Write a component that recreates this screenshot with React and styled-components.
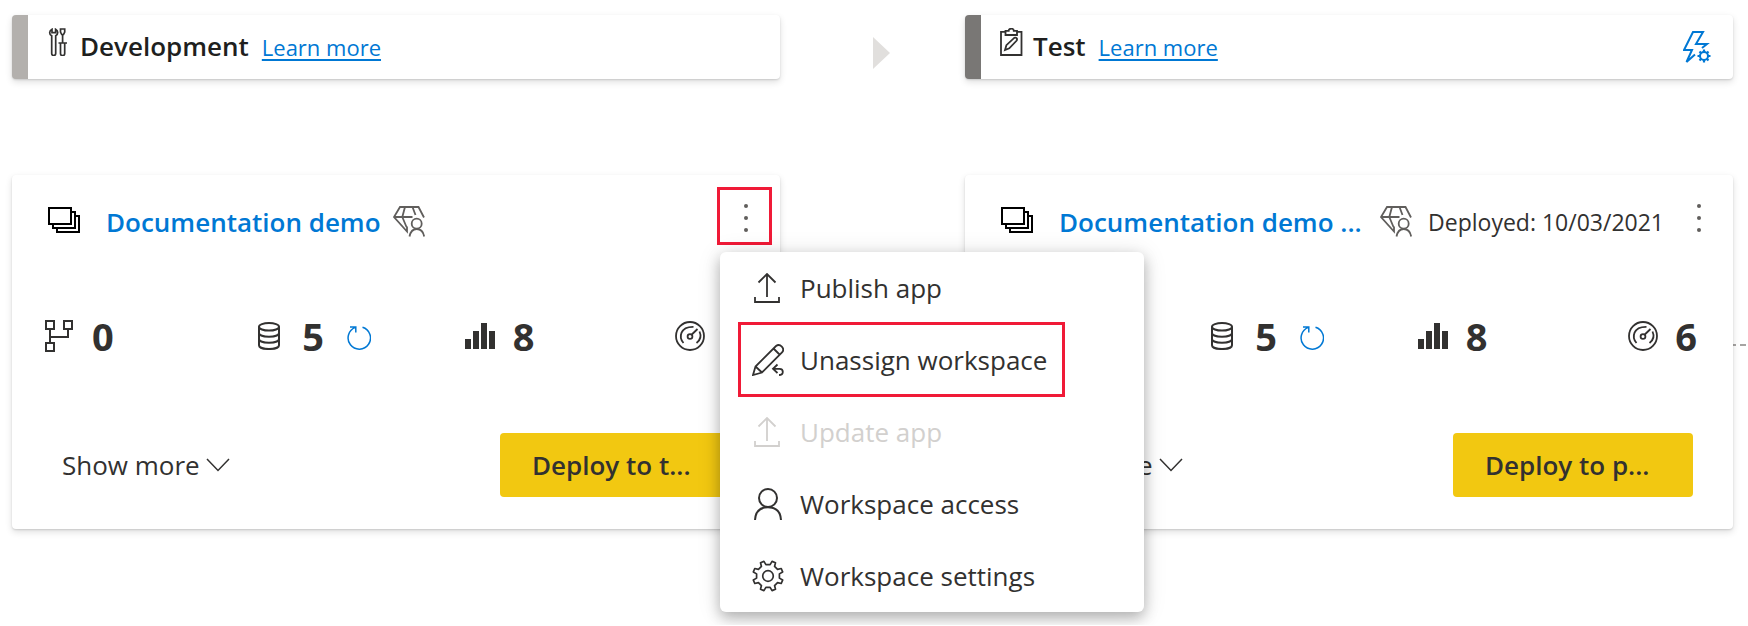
import React from 'react';
import styled, { createGlobalStyle } from 'styled-components';

const GlobalStyle = createGlobalStyle`
  *, *::before, *::after { box-sizing: border-box; }
  body {
    margin: 0;
    background: #fff;
    color: #323130;
    font-family: "Open Sans", "Noto Sans", sans-serif;
    font-size: 26px;
    line-height: 36px;
  }
`;

const Page = styled.main`
  display: grid;
  grid-template-columns: minmax(0, 1fr) 185px minmax(0, 1fr) 15px;
  row-gap: 96px;
  padding: 15px 0 96px 12px;
  overflow: hidden;
`;

const Surface = styled.section`
  background: #fff;
  border-radius: 4px;
  box-shadow: 0 3px 7px rgba(0, 0, 0, 0.13), 0 1px 2px rgba(0, 0, 0, 0.13);
`;

const StageHeader = styled(Surface)`
  display: flex;
  align-items: center;
  min-height: 64px;
  padding-right: 22px;
  border-left: 16px solid ${(p) => p.$accent};
  grid-column: ${(p) => p.$column};
`;

const StageTitle = styled.div`
  display: flex;
  align-items: baseline;
  flex: 1;
  gap: 8px;
  padding: 0 0 2px 16px;
`;

const StageName = styled.h2`
  margin: 0 5px 0 0;
  color: #201f1e;
  font-size: 26px;
  font-weight: 600;
`;

const LearnLink = styled.a`
  color: #0078d4;
  font-size: 22px;
  text-decoration: underline;
  text-decoration-thickness: 2px;
  text-underline-offset: 3px;
`;

const IconButton = styled.button`
  display: flex;
  padding: 0;
  border: 0;
  background: none;
  color: #0078d4;
`;

const StageArrow = styled.div`
  display: flex;
  align-items: center;
  justify-content: center;
  padding-top: 12px;
  color: #e1dfdd;
`;

const Card = styled(Surface)`
  position: relative;
  display: flex;
  flex-direction: column;
  grid-column: ${(p) => p.$column};
  z-index: ${(p) => (p.$raised ? 1 : 0)};
  padding: 12px 0 32px;
`;

const CardHead = styled.header`
  display: flex;
  align-items: center;
  padding: 0 8px 0 36px;
  margin-bottom: 69px;
`;

const CardTitle = styled.div`
  display: flex;
  align-items: center;
  flex: 1;
  padding-top: 11px;
`;

const WorkspaceLink = styled.a`
  flex-grow: ${(p) => (p.$fill ? 1 : 0)};
  margin: 0 12px 0 26px;
  color: #0078d4;
  font-weight: 600;
  text-decoration: none;
  white-space: nowrap;
`;

const Deployed = styled.span`
  padding: 0 6px 0 16px;
  font-size: 23px;
  white-space: nowrap;
`;

const MoreButton = styled.button`
  display: flex;
  align-items: center;
  justify-content: center;
  width: 55px;
  height: 58px;
  padding: 3px 0 0 3px;
  border: 3px solid ${(p) => (p.$marked ? '#f01a37' : 'transparent')};
  background: none;
  color: #605e5c;
`;

const Stats = styled.ul`
  display: grid;
  grid-template-columns: repeat(3, minmax(0, 1fr)) 70px;
  margin: 0;
  padding: 0 36px 0 31px;
  list-style: none;
`;

const Stat = styled.li`
  display: flex;
  align-items: center;
  gap: 17px;
  height: 44px;
`;

const StatIcon = styled.span`
  display: flex;
  justify-content: center;
  width: 32px;
`;

const StatValue = styled.strong`
  font-size: 38px;
  line-height: 44px;
  font-weight: 700;
`;

const RefreshButton = styled(IconButton)`
  padding: 4px 0 0 6px;
`;

const CardFoot = styled.footer`
  display: flex;
  align-items: center;
  justify-content: space-between;
  margin-top: 75px;
  padding: 0 40px 0 50px;
`;

const ShowMore = styled.button`
  display: flex;
  align-items: center;
  gap: 6px;
  padding: 0;
  border: 0;
  background: none;
  color: inherit;
  font: inherit;
`;

const DeployButton = styled.button`
  width: 240px;
  height: 64px;
  padding: 0 32px;
  border: 0;
  border-radius: 4px;
  background: #f2c811;
  color: #323130;
  font: inherit;
  font-weight: 600;
  text-align: left;
  white-space: nowrap;
`;

const Connector = styled.div`
  grid-column: 4;
  height: 2px;
  margin-top: 169px;
  background: repeating-linear-gradient(90deg, #a6a4a2 0 3px, transparent 3px 7px, #a6a4a2 7px 10px);
`;

const Menu = styled.div`
  position: absolute;
  top: 77px;
  left: calc(100% - 60px);
  width: 424px;
  border-radius: 6px;
  background: #fff;
  box-shadow: 0 6px 14px rgba(0, 0, 0, 0.25), 0 2px 24px rgba(0, 0, 0, 0.12);
`;

const MenuItem = styled.button`
  position: relative;
  display: flex;
  align-items: center;
  gap: 16px;
  width: 100%;
  height: 72px;
  padding: 0 32px;
  border: 0;
  background: none;
  color: #323130;
  font: inherit;
  text-align: left;

  &:disabled { color: #d2d0ce; }
`;

const MenuIcon = styled.span`
  display: flex;
  justify-content: center;
  width: 32px;
`;

const Marker = styled.span`
  position: absolute;
  inset: -2px 79px -1px 18px;
  border: 3px solid #f01a37;
`;

function Icon({ w, h, sw = 2, children }) {
  return (
    <svg width={w} height={h} viewBox={`0 0 ${w} ${h}`} fill="none" stroke="currentColor" strokeWidth={sw} aria-hidden="true">
      {children}
    </svg>
  );
}

function gearPath({ cx, cy, outer, inner, teeth, topHalf, baseHalf, start }) {
  const at = (r, deg) => {
    const a = ((deg - 90) * Math.PI) / 180;
    return `${(cx + r * Math.cos(a)).toFixed(2)} ${(cy + r * Math.sin(a)).toFixed(2)}`;
  };
  const points = [];
  for (let i = 0; i < teeth; i += 1) {
    const mid = start + (i * 360) / teeth;
    points.push(at(inner, mid - baseHalf), at(outer, mid - topHalf), at(outer, mid + topHalf), at(inner, mid + baseHalf));
  }
  return `M${points.join('L')}Z`;
}

const ToolsIcon = () => (
  <Icon w={28} h={28} sw={1.7}>
    <path d="M8 1.2C5 2.6 5 6.4 7.7 7.8V25.5a2 2 0 0 0 4 0V7.8C14.4 6.4 14.4 2.6 11.6 1.2V4.6H8Z" />
    <path d="M16.5 1h4.2v3l-1.2 2.5h-1.8L16.5 4ZM18.6 6.500V15M14.500 15h8.500M16.500 15v10.500a2 2 0 0 0 4.200 0V15" />
  </Icon>
);

const ClipboardIcon = () => (
  <Icon w={28} h={28} sw={1.8}>
    <path d="M8.5 3.8H4V27H24.500V3.800H20M8.500 7V2.800h3.200C11.700 0 16.800 0 16.800 2.800H20V7Z" />
    <path d="M8 22l1.400-4.800 7.800-7.300c2-1 3.500.8 2.500 2.600L12.300 20.300Z" />
  </Icon>
);

const BoltGearIcon = () => (
  <Icon w={28} h={32}>
    <path d="M19 17L24 13H13L20 1H10L1 19H9L3.500 31L12 23.500" />
    <circle cx="21" cy="25" r="4" />
    <path
      d="M21 18.500V21M21 29V31.500M14.500 25H17M25 25H27.500M16.500 20.500L18.200 22.200M23.800 27.800L25.500 29.500M25.500 20.500L23.800 22.200M18.200 27.800L16.500 29.500"
      strokeWidth="2.200"
    />
  </Icon>
);

const WorkspaceIcon = () => (
  <Icon w={32} h={30}>
    <g stroke="#000">
      <path d="M1 1h22v16H1ZM24 5h3v16H5v-3M28 9h3v16H9v-3" />
    </g>
  </Icon>
);

const PremiumIcon = () => (
  <Icon w={32} h={31} sw={1.8}>
    <g stroke="#605e5c">
      <path d="M31 11.500L25.500 1H7L1 11L14 25.500V20.500M1 11H19.500M12 1L9.300 11L13.500 21M19.500 1L22.500 9" />
      <circle cx="23.700" cy="17.700" r="5" />
      <path d="M16.500 30.500C17.500 25.500 20 23 23.700 23S30.300 25.500 31.200 30.500" />
    </g>
  </Icon>
);

const MoreIcon = () => (
  <Icon w={4} h={28}>
    <g fill="currentColor" stroke="none">
      <circle cx="2" cy="2" r="2" />
      <circle cx="2" cy="14" r="2" />
      <circle cx="2" cy="26" r="2" />
    </g>
  </Icon>
);

const DataflowIcon = () => (
  <Icon w={28} h={32}>
    <path d="M1 1h8v8H1ZM19 1h8v8H19ZM1 23h8v8H1ZM5 9V23M5 17H23V9" />
  </Icon>
);

const DatasetIcon = () => (
  <Icon w={22} h={28}>
    <ellipse cx="11" cy="4.800" rx="10" ry="3.800" />
    <path d="M1 4.800V23.200C1 28.300 21 28.300 21 23.200V4.800M1 11C1 16 21 16 21 11M1 17C1 22 21 22 21 17" />
  </Icon>
);

const ReportIcon = () => (
  <Icon w={30} h={26}>
    <path fill="currentColor" stroke="none" d="M0 16h6v10H0ZM8 8h6v18H8ZM16 0h6v26H16ZM24 8h6v18H24Z" />
  </Icon>
);

const DashboardIcon = () => (
  <Icon w={30} h={30} sw={1.8}>
    <circle cx="15" cy="15" r="14" />
    <circle cx="15" cy="15.500" r="2.400" />
    <path d="M16.800 13.500L22.500 8M8.500 22C3.500 16.500 5 5.500 18.500 5.800M24.500 10.500C26.300 14.500 25.500 19 21.500 22" />
  </Icon>
);

const RefreshIcon = () => (
  <Icon w={24} h={24} sw={1.5}>
    <path d="M15.500 1.200A11.200 11.200 0 1 1 8.500 1.400M3 .9H8.800V6.500" />
  </Icon>
);

const ChevronIcon = () => (
  <Icon w={24} h={14} sw={1.5}>
    <path d="M1 1L12 12.500L23 1" />
  </Icon>
);

const PlayIcon = () => (
  <Icon w={36} h={32}>
    <path d="M18 0L35 16L18 32Z" fill="currentColor" stroke="none" />
  </Icon>
);

const UploadIcon = () => (
  <Icon w={32} h={30} sw={1.8}>
    <path d="M15 24V1.500M6.500 9.500L15 1L23.500 9.500M3 24V29H27V24" />
  </Icon>
);

const UnassignIcon = () => (
  <Icon w={32} h={32} sw={1.8}>
    <path d="M1 31L3.500 22.500L24 2C28 -1 33.500 4.500 30 8.500L10 28.500ZM3.500 22.500L10 28.500M21.500 4.500L27.500 10.500" />
    <path d="M25.500 20.500L21 24.800L25.500 29M21 24.800H27.500C32 25 32 31 27 31" />
  </Icon>
);

const PersonIcon = () => (
  <Icon w={28} h={32}>
    <circle cx="14" cy="10" r="9" />
    <path d="M1 32C1.500 24 6 19.200 14 19.200S26.500 24 27 32" />
  </Icon>
);

const settingsGear = gearPath({
  cx: 16, cy: 16, outer: 15.2, inner: 11.6, teeth: 8, topHalf: 7, baseHalf: 12, start: 22.5,
});

const GearIcon = () => (
  <Icon w={32} h={32} sw={1.7}>
    <path d={settingsGear} strokeLinejoin="round" />
    <circle cx="16" cy="16" r="5.300" />
  </Icon>
);

const menuItems = [
  { label: 'Publish app', icon: UploadIcon },
  { label: 'Unassign workspace', icon: UnassignIcon, marked: true },
  { label: 'Update app', icon: UploadIcon, disabled: true },
  { label: 'Workspace access', icon: PersonIcon },
  { label: 'Workspace settings', icon: GearIcon },
];

const stats = [
  { name: 'Dataflows', value: 0, icon: DataflowIcon },
  { name: 'Datasets', value: 5, icon: DatasetIcon, refresh: true },
  { name: 'Reports', value: 8, icon: ReportIcon },
  { name: 'Dashboards', value: 6, icon: DashboardIcon },
];

function Stage({ column, name, accent, icon: StageIcon, rules }) {
  return (
    <StageHeader $column={column} $accent={accent}>
      <StageTitle>
        <StageIcon />
        <StageName>{name}</StageName>
        <LearnLink href="#learn">Learn more</LearnLink>
      </StageTitle>
      {rules && (
        <IconButton type="button" aria-label="Deployment rules">
          <BoltGearIcon />
        </IconButton>
      )}
    </StageHeader>
  );
}

function WorkspaceMenu() {
  return (
    <Menu role="menu">
      {menuItems.map(({ label, icon: ItemIcon, disabled, marked }) => (
        <MenuItem key={label} type="button" role="menuitem" disabled={disabled}>
          <MenuIcon>
            <ItemIcon />
          </MenuIcon>
          {label}
          {marked && <Marker />}
        </MenuItem>
      ))}
    </Menu>
  );
}

function WorkspaceCard({ column, title, deployed, action, menuOpen }) {
  return (
    <Card $column={column} $raised={menuOpen}>
      <CardHead>
        <CardTitle>
          <WorkspaceIcon />
          <WorkspaceLink href="#workspace" $fill={Boolean(deployed)}>{title}</WorkspaceLink>
          <PremiumIcon />
          {deployed && <Deployed>Deployed: {deployed}</Deployed>}
        </CardTitle>
        <MoreButton type="button" aria-label="More options" $marked={menuOpen}>
          <MoreIcon />
        </MoreButton>
      </CardHead>
      <Stats>
        {stats.map(({ name, value, icon: KindIcon, refresh }) => (
          <Stat key={name} title={name}>
            <StatIcon>
              <KindIcon />
            </StatIcon>
            <StatValue>{value}</StatValue>
            {refresh && (
              <RefreshButton type="button" aria-label="Refresh">
                <RefreshIcon />
              </RefreshButton>
            )}
          </Stat>
        ))}
      </Stats>
      <CardFoot>
        <ShowMore type="button">
          Show more
          <ChevronIcon />
        </ShowMore>
        <DeployButton type="button">{action}</DeployButton>
      </CardFoot>
      {menuOpen && <WorkspaceMenu />}
    </Card>
  );
}

export default function App() {
  return (
    <>
      <GlobalStyle />
      <Page>
        <Stage column={1} name="Development" accent="#b3b0ad" icon={ToolsIcon} />
        <StageArrow>
          <PlayIcon />
        </StageArrow>
        <Stage column={3} name="Test" accent="#797775" icon={ClipboardIcon} rules />
        <WorkspaceCard column={1} title="Documentation demo" action="Deploy to t..." menuOpen />
        <WorkspaceCard column={3} title="Documentation demo ..." deployed="10/03/2021" action="Deploy to p..." />
        <Connector />
      </Page>
    </>
  );
}
